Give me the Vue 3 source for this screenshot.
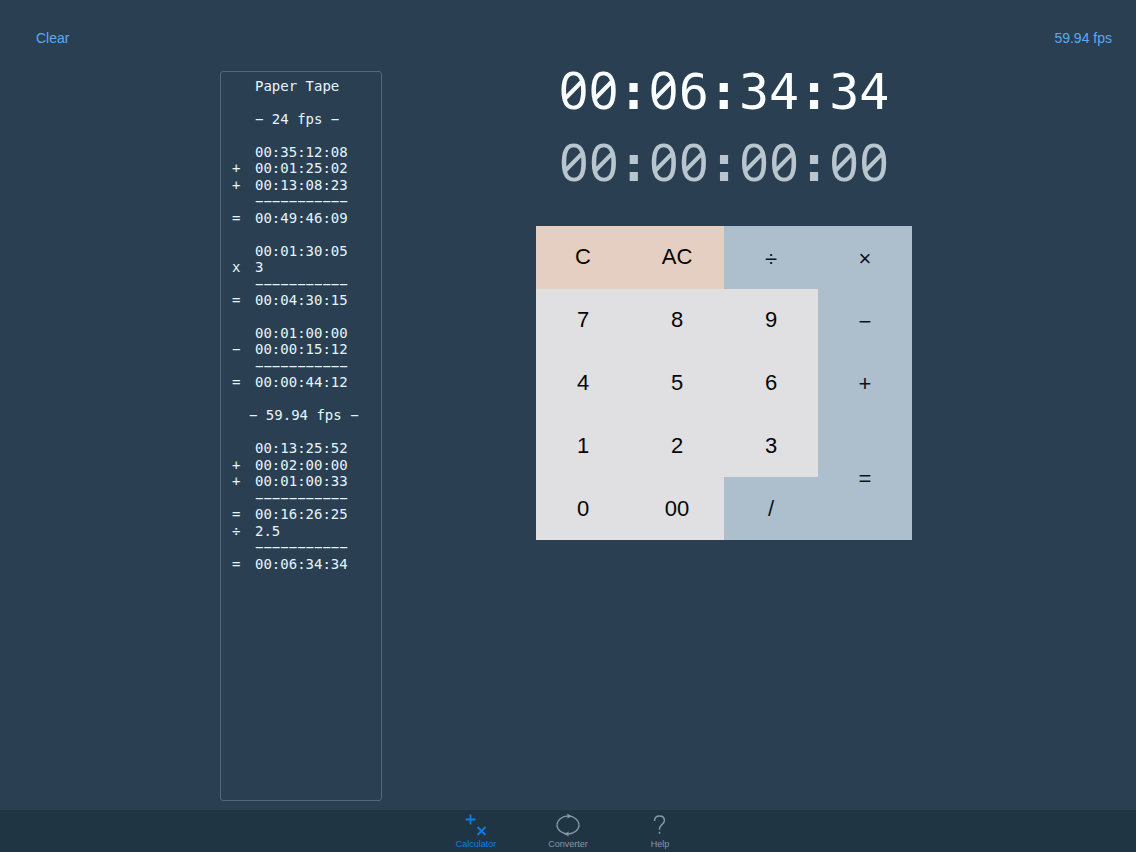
<script setup>
import { ref } from 'vue'

const rule = '−−−−−−−−−−−'
const tape = [
  ['', 'Paper Tape'],
  ['', ''],
  ['', '− 24 fps −'],
  ['', ''],
  ['', '00:35:12:08'],
  ['+', '00:01:25:02'],
  ['+', '00:13:08:23'],
  ['', rule],
  ['=', '00:49:46:09'],
  ['', ''],
  ['', '00:01:30:05'],
  ['x', '3'],
  ['', rule],
  ['=', '00:04:30:15'],
  ['', ''],
  ['', '00:01:00:00'],
  ['−', '00:00:15:12'],
  ['', rule],
  ['=', '00:00:44:12'],
  ['', ''],
  ['', '− 59.94 fps −', 'wide'],
  ['', ''],
  ['', '00:13:25:52'],
  ['+', '00:02:00:00'],
  ['+', '00:01:00:33'],
  ['', rule],
  ['=', '00:16:26:25'],
  ['÷', '2.5'],
  ['', rule],
  ['=', '00:06:34:34'],
]

const keys = [
  ['C', 'clear'], ['AC', 'clear'], ['÷', 'op low'], ['×', 'op low'],
  ['7', ''], ['8', ''], ['9', ''], ['−', 'op low'],
  ['4', ''], ['5', ''], ['6', ''], ['+', 'op low'],
  ['1', ''], ['2', ''], ['3', ''], ['=', 'op low tall'],
  ['0', ''], ['00', ''], ['/', 'op'],
]

const result = ref('00:06:34:34')
const entry = ref('00:00:00:00')

// Zeros take a slashed form and colons a heavier weight.
const kinds = { 0: 'zero', ':': 'colon' }
const pieces = (text) => text.split(/([0:])/).filter(Boolean)
</script>

<template>
  <div class="app">
    <header class="bar">
      <button type="button" class="link">Clear</button>
      <button type="button" class="link">59.94 fps</button>
    </header>

    <main class="main">
      <section class="tape" aria-label="Paper Tape">
        <div class="lines">
          <div v-for="(line, i) in tape" :key="i" class="line">
            <span>{{ line[0] }}</span>
            <span :class="line[2]">{{ line[1] }}</span>
          </div>
        </div>
      </section>

      <section class="calc">
        <output class="display"><span v-for="(p, j) in pieces(result)" :key="j" :class="kinds[p]">{{ p }}</span></output>
        <output class="display dim"><span v-for="(p, j) in pieces(entry)" :key="j" :class="kinds[p]">{{ p }}</span></output>
        <div class="keypad">
          <button v-for="k in keys" :key="k[0]" type="button" class="key" :class="k[1]">{{ k[0] }}</button>
        </div>
      </section>
    </main>

    <nav class="tabs">
      <button type="button" class="tab active">
        <svg width="24" height="24" viewBox="0 0 24 24" fill="none" stroke="currentColor" stroke-width="1.8">
          <path d="M1.500 6.500h10M6.500 1.500v10M13.500 14l8 8M21.500 14l-8 8" />
        </svg>
        <span>Calculator</span>
      </button>
      <button type="button" class="tab">
        <svg width="24" height="24" viewBox="0 0 24 24" fill="none" stroke="currentColor" stroke-width="1.3">
          <ellipse cx="12" cy="12" rx="11" ry="9" />
          <path d="M11 .6l5 2.600L11 5.600l1-2.400zM13 18.400l-5 2.600 5 2.400-1-2.400z" fill="currentColor" stroke="none" />
        </svg>
        <span>Converter</span>
      </button>
      <button type="button" class="tab">
        <svg width="24" height="24" viewBox="0 0 24 24" fill="none" stroke="currentColor" stroke-width="1.5">
          <path d="M6.500 8C6.500 4.700 8.500 3 11.500 3s4.900 1.800 4.900 4.500c0 3.800-4.900 4.400-4.900 8v1.200M11.500 18.800v2" />
        </svg>
        <span>Help</span>
      </button>
    </nav>
  </div>
</template>

<style>
body {
  margin: 0;
  background: #2a4052;
}
</style>

<style scoped>
.app {
  min-height: 100vh;
  display: flex;
  flex-direction: column;
  background: #2a4052;
  font-family: "Liberation Sans", Arial, sans-serif;
}

button {
  margin: 0;
  padding: 0;
  border: 0;
  background: none;
  font-family: inherit;
  cursor: pointer;
}

.bar {
  display: flex;
  justify-content: space-between;
  padding: 28px 24px 23px 36px;
}

.link {
  color: #5aaaf0;
  font-size: 14px;
  line-height: 20px;
}

.main {
  flex: 1;
  display: flex;
  justify-content: center;
  gap: 154px;
  padding: 0 4px 9px 0;
}

.tape {
  box-sizing: border-box;
  width: 162px;
  padding: 6px 0 0 11px;
  border: 1px solid #52687a;
  border-radius: 3px;
  color: #e6f5fd;
  font-family: "DejaVu Sans Mono", monospace;
  font-size: 14px;
  line-height: 16px;
}

.lines {
  display: grid;
  grid-template-rows: repeat(30, 1fr);
  height: 494px;
}

.line {
  display: grid;
  grid-template-columns: 23px 1fr;
  white-space: pre;
}

.wide {
  margin-left: -6px;
}

.calc {
  width: 376px;
}

.display {
  display: block;
  height: 72px;
  color: #fbfeff;
  font-family: "DejaVu Sans Mono", monospace;
  font-size: 50px;
  line-height: 42px;
  text-align: center;
}

.dim {
  height: 83px;
  color: #b9c6d0;
}

.zero {
  display: inline-block;
  width: 30px;
  font-family: "Noto Sans", sans-serif;
  font-feature-settings: "zero";
  font-size: 51px;
  line-height: 0;
}

.colon {
  font-weight: bold;
}

.keypad {
  display: grid;
  grid-template-columns: repeat(4, 1fr);
  grid-template-rows: repeat(5, 1fr);
  height: 314px;
  background: #adbfcd;
}

.key {
  background: #e0dfe1;
  color: #050505;
  font-size: 22px;
  line-height: 24px;
}

.clear {
  background: #e5cfc2;
}

.op {
  background: #adbfcd;
  color: #08131c;
}

.low {
  padding-top: 3px;
}

.tall {
  grid-row: 4 / 6;
  grid-column: 4;
}

.tabs {
  display: flex;
  justify-content: center;
  height: 42px;
  background: #203543;
}

.tab {
  width: 92px;
  display: flex;
  flex-direction: column;
  align-items: center;
  padding-top: 3px;
  color: #8597a3;
  font-size: 9px;
  line-height: 14px;
}

.active {
  color: #0f7de8;
}
</style>
